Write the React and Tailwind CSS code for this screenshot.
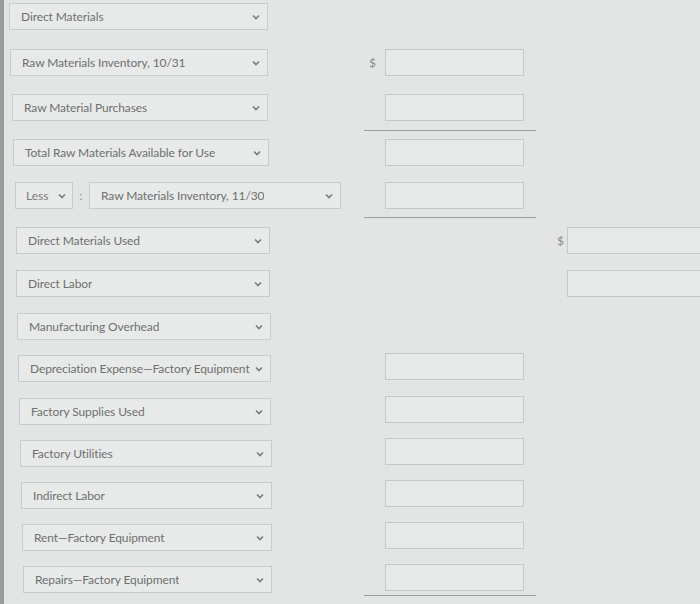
import React from "react";

const rows = [
  { pl: "pl-[9px]", h: "h-[46px]", label: "Direct Materials", w: "w-[259px]" },
  { pl: "pl-[10px]", h: "h-[45px]", label: "Raw Materials Inventory, 10/31", w: "w-[258px]", mid: "dollar" },
  { pl: "pl-[12px]", h: "h-[45px]", label: "Raw Material Purchases", w: "w-[256px]", mid: "box", line: "h-[37px]" },
  { pl: "pl-[13px]", h: "h-[43px]", label: "Total Raw Materials Available for Use", w: "w-[256px]", mid: "box" },
  { pl: "pl-[15px]", h: "h-[45px]", less: true, mid: "box", line: "h-[36px]" },
  { pl: "pl-[16px]", h: "h-[43px]", label: "Direct Materials Used", w: "w-[254px]", right: "dollar" },
  { pl: "pl-[16px]", h: "h-[43px]", label: "Direct Labor", w: "w-[254px]", right: "box" },
  { pl: "pl-[17px]", h: "h-[42px]", label: "Manufacturing Overhead", w: "w-[254px]" },
  { pl: "pl-[18px]", h: "h-[43px]", label: "Depreciation Expense\u2014Factory Equipment", w: "w-[253px]", mid: "box", up: true },
  { pl: "pl-[19px]", h: "h-[42px]", label: "Factory Supplies Used", w: "w-[252px]", mid: "box", up: true },
  { pl: "pl-[20px]", h: "h-[42px]", label: "Factory Utilities", w: "w-[252px]", mid: "box", up: true },
  { pl: "pl-[21px]", h: "h-[42px]", label: "Indirect Labor", w: "w-[251px]", mid: "box", up: true },
  { pl: "pl-[22px]", h: "h-[42px]", label: "Rent\u2014Factory Equipment", w: "w-[250px]", mid: "box", up: true },
  { pl: "pl-[23px]", h: "h-[38px]", label: "Repairs\u2014Factory Equipment", w: "w-[249px]", mid: "box", up: true, line: "h-[32px]" },
];

const Chevron = () => (
  <svg width="8" height="6" viewBox="0 0 8 6" className="shrink-0">
    <path d="M1 1.5 L4 4.5 L7 1.5" fill="none" stroke="#7a7c7b" strokeWidth="1.6" />
  </svg>
);

const Select = ({ label, w }) => (
  <div
    className={`${w} h-[27px] flex items-center justify-between pl-[11px] pr-[7px] border border-[#c9cccb] bg-[#e8eae9] text-[12px] text-[#6e706f] tracking-[-0.1px]`}
  >
    <span className="truncate">{label}</span>
    <Chevron />
  </div>
);

const Box = () => (
  <div className="w-[139px] h-[27px] border border-[#c6c9c8] bg-[#e7e9e8]" />
);

const Dollar = () => (
  <span className="text-[12px] text-[#8a8c8b] leading-none">$</span>
);

const Label = ({ row }) => (
  <div className={`${row.h} ${row.pl} flex items-start`}>
    {row.less ? (
      <div className="flex items-center">
        <div className="w-[58px] h-[27px] flex items-center justify-between pl-[10px] pr-[6px] border border-[#c9cccb] bg-[#e8eae9] text-[12px] text-[#7a7c7b]">
          <span>Less</span>
          <Chevron />
        </div>
        <span className="w-[16px] text-center text-[12px] text-[#8a8c8b]">:</span>
        <Select label="Raw Materials Inventory, 11/30" w="w-[252px]" />
      </div>
    ) : (
      <Select label={row.label} w={row.w} />
    )}
  </div>
);

const MidCell = ({ row }) => (
  <div className={`${row.h} w-[172px] shrink-0 flex flex-col ${row.up ? "-mt-[2px]" : ""}`}>
    <div className={`${row.line || "h-[37px]"} flex items-start ${row.line ? "border-b border-[#9c9e9d]" : ""}`}>
      <div className="w-[21px] h-[27px] flex items-center pl-[5px]">
        {row.mid === "dollar" && <Dollar />}
      </div>
      {row.mid && <Box />}
    </div>
  </div>
);

const RightCell = ({ row }) => (
  <div className={`${row.h} flex-1 flex items-start`}>
    {row.right && (
      <>
        <div className="w-[31px] h-[27px] flex items-center pl-[21px]">
          {row.right === "dollar" && <Dollar />}
        </div>
        <div className="flex-1 h-[27px] border border-r-0 border-[#c6c9c8] bg-[#e7e9e8]" />
      </>
    )}
  </div>
);

export default function App() {
  return (
    <div
      className="w-[700px] h-[604px] overflow-hidden flex bg-[#e3e5e4]"
      style={{ fontFamily: "Lato, 'Open Sans', sans-serif" }}
    >
      <div className="w-[4px] shrink-0 bg-[#9a9c9b]" />
      <div className="flex-1 flex flex-col pt-[3px] ml-[-4px]">
        {rows.map((row, i) => (
          <div key={i} className="flex items-start">
            <div className="w-[364px] shrink-0">
              <Label row={row} />
            </div>
            <MidCell row={row} />
            <RightCell row={row} />
          </div>
        ))}
        <div className="flex-1 bg-[#e9ebea]" />
      </div>
    </div>
  );
}
